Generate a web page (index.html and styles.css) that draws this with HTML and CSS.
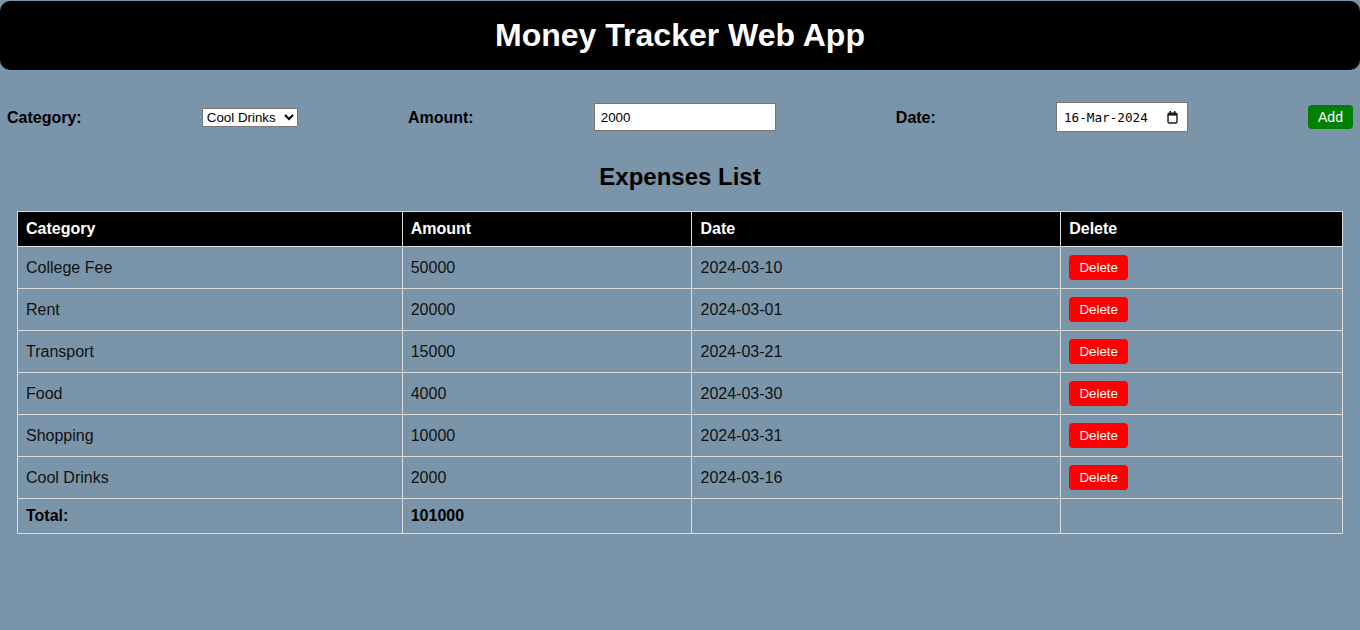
FILE: index.html
```html
<!DOCTYPE html>
<html>
<head>
<meta charset="utf-8">
<title>Money Tracker Web App</title>
<link rel="stylesheet" href="styles.css">
</head>
<body>
<header class="app-header">
  <h1 class="app-title">Money Tracker Web App</h1>
</header>
<form class="entry-form">
  <label class="field-label" for="cat">Category:</label>
  <select id="cat" class="cat-select">
    <option>Food</option>
    <option>Rent</option>
    <option>Transport</option>
    <option>Shopping</option>
    <option>College Fee</option>
    <option selected>Cool Drinks</option>
  </select>
  <label class="field-label" for="amt">Amount:</label>
  <input id="amt" class="amount-input" type="number" value="2000">
  <label class="field-label" for="dt">Date:</label>
  <div class="date-box">
    <input id="dt" class="date-text" type="text" value="16-Mar-2024" readonly>
    <svg class="cal-icon" width="11" height="13" viewBox="0 0 11 13" aria-hidden="true">
      <rect x="2.5" y="0" width="1.6" height="2" fill="#1a1a1a"/>
      <rect x="6.9" y="0" width="1.6" height="2" fill="#1a1a1a"/>
      <rect x="1" y="2.2" width="9" height="9.8" rx="1.3" fill="none" stroke="#1a1a1a" stroke-width="1.4"/>
      <rect x="1" y="2.2" width="9" height="2.4" fill="#1a1a1a"/>
    </svg>
  </div>
  <button type="button" class="add-btn">Add</button>
</form>
<h2 class="list-title">Expenses List</h2>
<table class="expense-table">
  <thead>
    <tr><th class="c1">Category</th><th class="c2">Amount</th><th class="c3">Date</th><th class="c4">Delete</th></tr>
  </thead>
  <tbody>
    <tr><td>College Fee</td><td>50000</td><td>2024-03-10</td><td><button class="del-btn">Delete</button></td></tr>
    <tr><td>Rent</td><td>20000</td><td>2024-03-01</td><td><button class="del-btn">Delete</button></td></tr>
    <tr><td>Transport</td><td>15000</td><td>2024-03-21</td><td><button class="del-btn">Delete</button></td></tr>
    <tr><td>Food</td><td>4000</td><td>2024-03-30</td><td><button class="del-btn">Delete</button></td></tr>
    <tr><td>Shopping</td><td>10000</td><td>2024-03-31</td><td><button class="del-btn">Delete</button></td></tr>
    <tr><td>Cool Drinks</td><td>2000</td><td>2024-03-16</td><td><button class="del-btn">Delete</button></td></tr>
  </tbody>
  <tfoot>
    <tr class="total-row"><td>Total:</td><td>101000</td><td></td><td></td></tr>
  </tfoot>
</table>
</body>
</html>
```
FILE: styles.css
```css
html, body {
  margin: 0;
  padding: 0;
}
body {
  background: #7a95a9;
  font-family: "Liberation Sans", Arial, sans-serif;
  color: #000;
}
.app-header {
  margin-top: 1px;
  background: #000;
  border-radius: 10px;
  height: 69px;
  display: flex;
  align-items: center;
  justify-content: center;
}
.app-title {
  margin: 0;
  color: #fff;
  font-size: 32px;
  font-weight: bold;
  line-height: 37px;
}
.entry-form {
  display: flex;
  justify-content: space-between;
  align-items: center;
  padding: 0 7px;
  margin-top: 32px;
  height: 30px;
}
.field-label {
  font-weight: bold;
  font-size: 16px;
  padding-top: 2px;
}
.cat-select {
  width: 96px;
  margin-right: -10px;
  font-family: "Liberation Sans", Arial, sans-serif;
  font-size: 13.33px;
}
.amount-input {
  box-sizing: border-box;
  width: 182px;
  height: 28px;
  padding: 3px 6px;
  border: 1px solid #767676;
  font-family: "Liberation Sans", Arial, sans-serif;
  font-size: 13.33px;
}
.date-box {
  box-sizing: border-box;
  width: 132px;
  height: 30px;
  padding: 0 9px 0 7px;
  border: 1px solid #767676;
  background: #fff;
  display: flex;
  align-items: center;
  justify-content: space-between;
}
.date-text {
  width: 90px;
  border: none;
  padding: 0;
  outline: none;
  background: transparent;
  font-family: "DejaVu Sans Mono", monospace;
  font-size: 12.67px;
  color: #000;
}
.cal-icon {
  display: block;
}
.add-btn {
  background: #008000;
  color: #fff;
  border: none;
  border-radius: 4px;
  font-family: "Liberation Sans", Arial, sans-serif;
  font-size: 14px;
  padding: 4px 10px;
  height: 24px;
}
.list-title {
  text-align: center;
  font-size: 24px;
  font-weight: bold;
  margin: 31px 0 20px;
  line-height: 28px;
}
.expense-table {
  margin: 0 17px;
  width: calc(100% - 34px);
  border-collapse: collapse;
  font-size: 16px;
}
.expense-table th,
.expense-table td {
  border: 1px solid #dddddd;
  padding: 8px;
  text-align: left;
  line-height: 18px;
}
.expense-table td {
  color: #111;
}
.expense-table th {
  background: #000;
  color: #fff;
  font-weight: bold;
}
.c1 { width: 368px; }
.c2 { width: 273px; }
.c3 { width: 352px; }
.c4 { width: 265px; }
.del-btn {
  background: #ff0000;
  color: #fff;
  border: none;
  border-radius: 4px;
  font-family: "Liberation Sans", Arial, sans-serif;
  font-size: 13.33px;
  padding: 5px 10px;
  height: 25px;
  width: 59px;
  vertical-align: middle;
}
.total-row td {
  font-weight: bold;
  color: #000;
}
```
